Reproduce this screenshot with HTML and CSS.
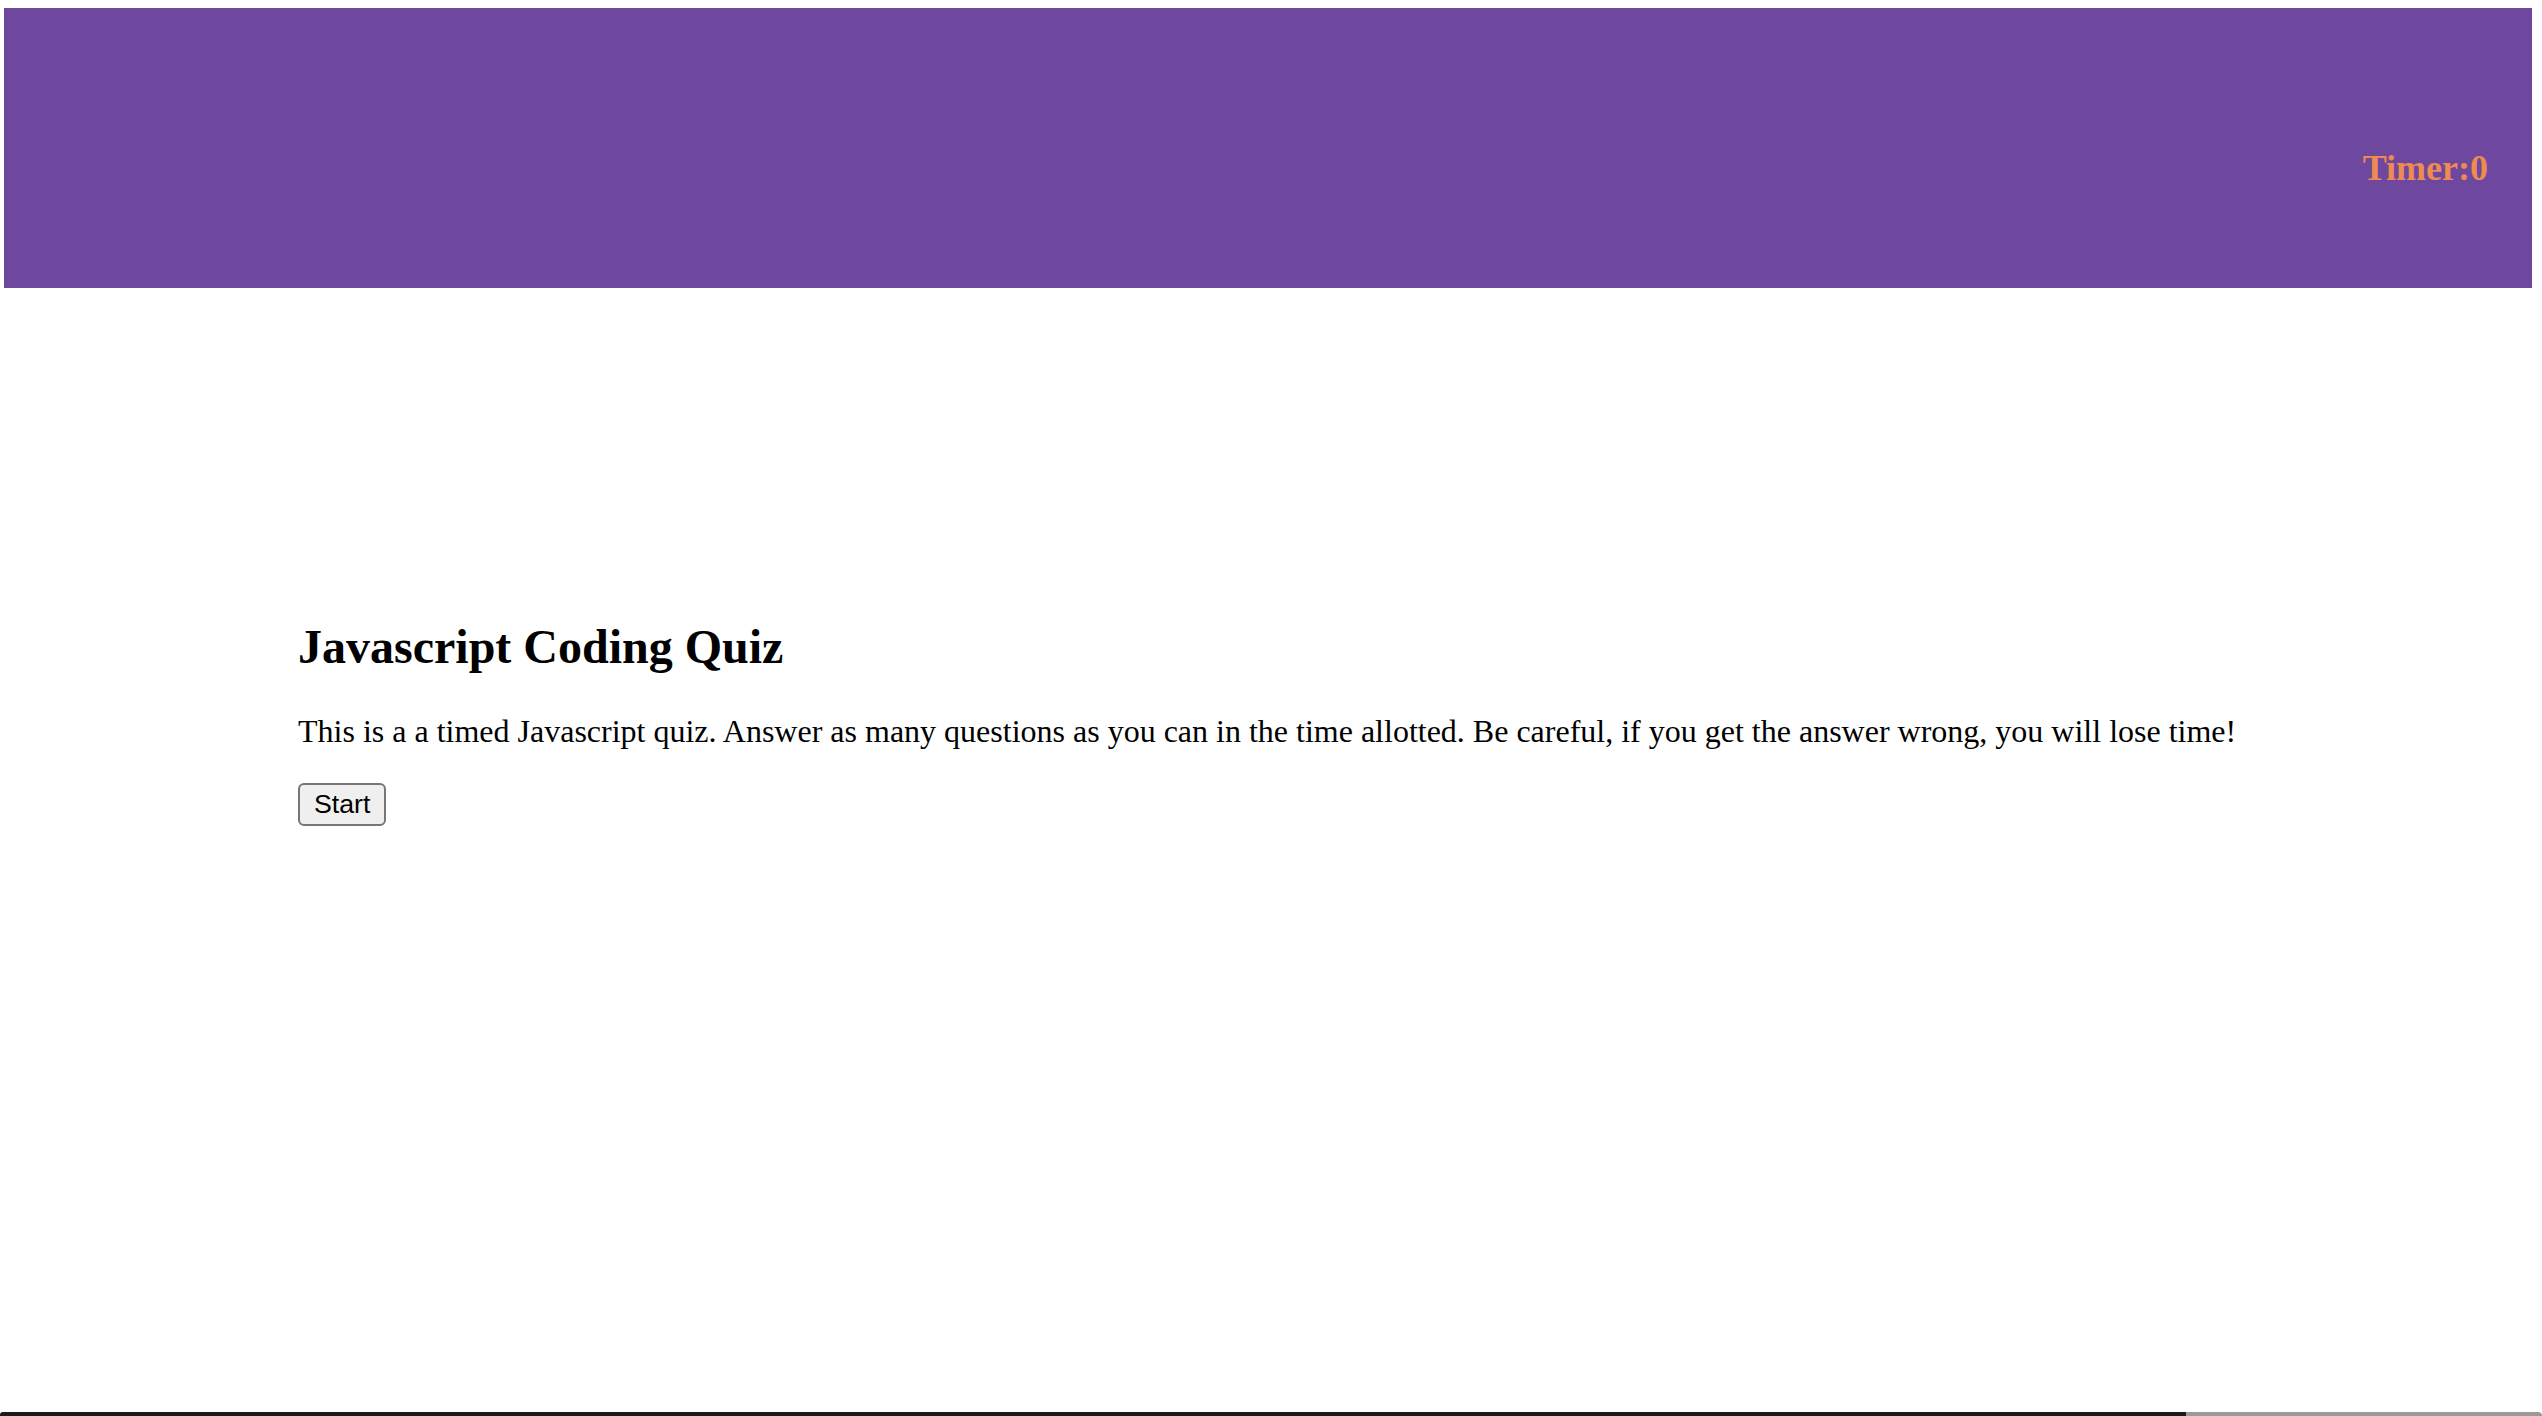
FILE: index.html
```html
<!DOCTYPE html>
<html lang="en">
<head>
<meta charset="utf-8">
<title>Javascript Coding Quiz</title>
<link rel="stylesheet" href="styles.css">
</head>
<body>
<header class="topbar">
  <div class="timer">Timer:<span class="timer-value">0</span></div>
</header>
<main class="intro">
  <h2 class="intro-title">Javascript Coding Quiz</h2>
  <p class="intro-text">This is a a timed Javascript quiz. Answer as many questions as you can in the time allotted. Be careful, if you get the answer wrong, you will lose time!</p>
  <button class="start-btn" type="button">Start</button>
</main>
<div class="window-edge">
  <div class="edge-dark"></div>
  <div class="edge-light"></div>
</div>
</body>
</html>
```
FILE: styles.css
```css
html, body {
  margin: 0;
  padding: 0;
  background: #ffffff;
  font-family: "Liberation Serif", "Times New Roman", serif;
  color: #000;
}

.topbar {
  margin: 8px 10px 0 4px;
  height: 280px;
  box-sizing: border-box;
  background: #6e489f;
  display: flex;
  justify-content: flex-end;
  align-items: flex-start;
  padding: 142px 44px 0 0;
}

.timer {
  font-size: 36px;
  line-height: 36px;
  font-weight: bold;
  color: #ef8a50;
}

.intro {
  padding: 331px 0 0 298px;
}

.intro-title {
  margin: 0;
  font-size: 48px;
  line-height: 56px;
  font-weight: bold;
}

.intro-text {
  margin: 36px 0 0 0;
  font-size: 32px;
  line-height: 40px;
}

.start-btn {
  margin-top: 32px;
  font-family: "Liberation Sans", Arial, sans-serif;
  font-size: 26.67px;
  color: #000;
  background: #efefef;
  border: 2px solid #767676;
  border-radius: 6px;
  padding: 4px 14px;
}

.window-edge {
  position: fixed;
  left: 0;
  right: 0;
  bottom: 0;
  height: 4px;
  display: flex;
}

.edge-dark {
  width: 2186px;
  background: #1b1b1b;
  border-top-left-radius: 3px;
}

.edge-light {
  flex: 1;
  background: #9a9a9a;
  border-top-right-radius: 6px;
}
```
